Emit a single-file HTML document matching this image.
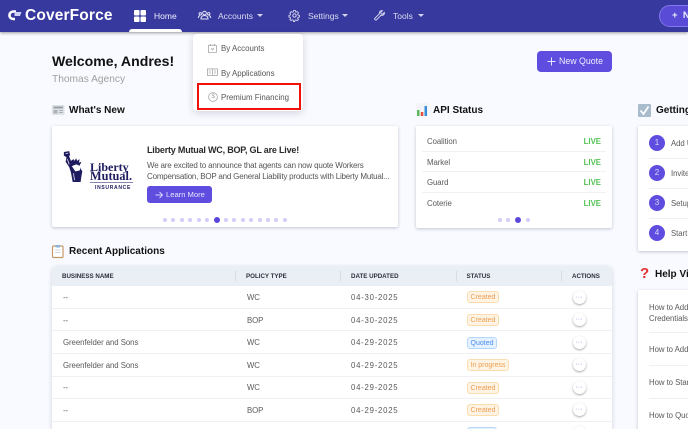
<!DOCTYPE html>
<html style="width:688px;height:429px;overflow:hidden"><head><meta charset="utf-8"><style>
html,body{margin:0;padding:0}
body{width:688px;height:429px;overflow:hidden;background:#f9faff;font-family:"Liberation Sans",sans-serif;color:#444}
#w{position:absolute;left:0;top:0;width:688px;height:429px;overflow:hidden}
.t{position:absolute;white-space:nowrap;line-height:12px;transform:translateY(-5px)}
.a{position:absolute}
svg{position:absolute;overflow:visible}
.card{position:absolute;background:#fff;border-radius:2px;box-shadow:0 1px 3px rgba(40,50,90,.28)}
.h{font-weight:700;font-size:10px;color:#111}
.n{font-size:8.5px;color:#dcdcf2}
.c{position:absolute;width:0;height:0;border-left:3px solid transparent;border-right:3px solid transparent;border-top:3px solid #d4d4ee}
.th{font-weight:700;font-size:6.2px;color:#2a2f3a}
.td{font-size:7.8px;color:#5a5a5a;letter-spacing:-.05px}
.dt{font-size:7.8px;color:#5a5a5a;letter-spacing:.75px}
.lv{right:87px;font-size:7.8px;font-weight:700;color:#55c255}
.b{position:absolute;height:10px;line-height:11px;font-size:7px;text-align:center;border-radius:3px}
.o{background:#fff4e3;border:1px solid #fbdcae;color:#ec9e55}
.q{background:#e5f2ff;border:1px solid #b5d6fb;color:#4d8ef0}
.ac{position:absolute;left:572.5px;width:13px;height:13px;border-radius:50%;background:#fff;box-shadow:0 1px 2px rgba(0,0,0,.35);color:#8f86e6;font-size:7px;line-height:13px;text-align:center}
.sep{position:absolute;height:1px;background:#eef0f4}
.d{position:absolute;width:4px;height:4px;border-radius:50%;background:#d5ccfb}
.D{position:absolute;width:6px;height:6px;border-radius:50%;background:#5b46dc}
.num{position:absolute;left:649px;width:16px;height:16px;border-radius:50%;background:#5f4ddf;color:#dcd8ff;font-size:8px;line-height:16px;text-align:center}
.m{font-size:7.9px;color:#555}
</style></head><body><div id="w">

<div class="a" style="left:0;top:0;width:688px;height:32px;background:#38399f;box-shadow:0 1px 3px rgba(0,0,0,.4)"></div>
<svg style="left:7px;top:9px" width="15" height="13" viewBox="0 0 15 13"><path d="M9 2.500H6.500C4.200 2.500 2.500 4 2.500 6.200S4.200 10 6.500 10H8" fill="none" stroke="#fff" stroke-width="2.600"/><path d="M7.500 3H14.500L13 7H7.500z" fill="#cfd0f5"/></svg>
<div class="t" style="left:25px;top:15px;font-size:15.5px;font-weight:700;color:#fff;letter-spacing:.15px">CoverForce</div>

<svg style="left:134px;top:10px" width="12" height="12"><rect x="0" y="0" width="5.500" height="5.500" rx="1" fill="#fff"/><rect x="6.500" y="0" width="5.500" height="5.500" rx="1" fill="#fff"/><rect x="0" y="6.500" width="5.500" height="5.500" rx="1" fill="#fff"/><rect x="6.500" y="6.500" width="5.500" height="5.500" rx="1" fill="#fff"/></svg>
<div class="t n" style="left:154px;top:14.5px;color:#f0f0ff">Home</div>
<div class="a" style="left:129px;top:29px;width:53px;height:3px;background:#fff;border-radius:3px 3px 0 0"></div>

<svg style="left:198px;top:10px" width="13" height="10" viewBox="0 0 13 10" fill="none" stroke="#e2e2f6" stroke-width="1"><circle cx="6.500" cy="3" r="1.800"/><path d="M3 9c0-2.500 1.500-3.500 3.500-3.500S10 6.500 10 9z"/><circle cx="2.300" cy="3.800" r="1.200"/><circle cx="10.700" cy="3.800" r="1.200"/><path d="M.3 8c0-1.500.8-2.300 1.800-2.300M12.700 8c0-1.500-.8-2.300-1.800-2.300"/></svg>
<div class="t n" style="left:218px;top:14.5px">Accounts</div>
<div class="c" style="left:257px;top:14px"></div>

<svg style="left:289px;top:10px" width="11" height="11" viewBox="0 0 11 11" fill="none" stroke="#d4d4ee"><circle cx="5.500" cy="5.500" r="1.700"/><path d="M4.500.6h2l.3 1.500 1.300-.6L9.500 3l-.9 1.100.4.900 1.400.5v1.500L9 7.400l-.4.900.9 1.200-1.400 1.200-1.200-.8-.9.300-.3 1.300H4.500l-.3-1.400-1-.3-1.200.8L.8 9.400l.8-1.200-.4-.9-1.300-.3V5.500l1.300-.4.400-1L.8 3l1.300-1.400 1.200.7 1-.4z" stroke-width=".9"/></svg>
<div class="t n" style="left:308px;top:14.5px">Settings</div>
<div class="c" style="left:342px;top:14px"></div>

<svg style="left:374px;top:10px" width="11" height="11" viewBox="0 0 11 11" fill="none" stroke="#d4d4ee" stroke-width="1"><path d="M10.300 2.500 8.500 4.200 7 3.800 6.700 2.300 8.400.7C6.800.2 5 1.500 5.400 3.800L.8 8.300c-.7.800.9 2.300 1.700 1.500L7 5.300c2 .6 3.800-1 3.300-2.800z"/></svg>
<div class="t n" style="left:393px;top:14.5px">Tools</div>
<div class="c" style="left:418px;top:14px"></div>

<div class="a" style="left:659px;top:5px;width:60px;height:20px;border:1px solid #8378ea;border-radius:11px;background:#5a4bd6"></div>
<div class="t" style="left:672px;top:14.5px;color:#eeeeff;font-size:9.5px;font-weight:700">+&nbsp;&nbsp;New</div>

<div class="t" style="left:52px;top:60px;font-size:14.1px;font-weight:700;color:#111">Welcome, Andres!</div>
<div class="t" style="left:52px;top:79px;font-size:10.2px;color:#a0a0a0">Thomas Agency</div>

<div class="a" style="left:537px;top:51px;width:74.5px;height:20.5px;background:#5f4ddf;border-radius:4px"></div>
<svg style="left:547px;top:56.5px" width="9" height="9" stroke="#e8e5ff" stroke-width="1"><path d="M4.500 .5v8M.5 4.500h8"/></svg>
<div class="t" style="left:559px;top:60px;font-size:8.8px;color:#f0eeff">New Quote</div>

<!-- What's new -->
<svg style="left:52px;top:104px" width="13" height="12"><rect x="0" y="1" width="12.500" height="10" rx="1" fill="#dfe3e8"/><rect x="1.500" y="2.500" width="9.500" height="2" fill="#9aa0a8"/><rect x="1.500" y="6" width="4" height="3.500" fill="#aab0b8"/><path d="M7 6.500h4M7 8.500h4" stroke="#aab0b8"/></svg>
<div class="t h" style="left:69px;top:110px">What's New</div>
<div class="card" style="left:52px;top:126px;width:346px;height:101px"></div>

<svg style="left:63px;top:151px" width="22" height="32" viewBox="0 0 25 36"><path d="M1 1l6-1 1 4-1 2 2 5 3-2 1 2 2-3 1 3 3-2-1 4 3-1-2 4 1 4 2 3-1 5-1 7H11L9 24 7 18 3 12 4 7 1 5z" fill="#1e1b5e"/><path d="M10 17l5-2 5 2-1 5-5 1z" fill="#fff"/><path d="M3 3l3-1M5 9l2 6M12 25l1 8" stroke="#fff" stroke-width=".8"/></svg>
<div class="t" style="left:90px;top:165.5px;font-family:'Liberation Serif',serif;font-weight:700;font-size:12px;color:#1e1b5e">Liberty</div>
<div class="t" style="left:90px;top:175px;font-family:'Liberation Serif',serif;font-weight:700;font-size:12.3px;color:#1e1b5e">Mutual.</div>
<div class="a" style="left:90px;top:182px;width:43px;height:1px;background:#8a88b0"></div>
<div class="t" style="left:95px;top:187px;font-size:5px;font-weight:700;color:#1e1b5e;letter-spacing:.7px">INSURANCE</div>

<div class="t" style="left:147px;top:149px;font-size:9px;font-weight:700;color:#2a2a2a;letter-spacing:-.2px">Liberty Mutual WC, BOP, GL are Live!</div>
<div class="t" style="left:147px;top:164.5px;font-size:8px;color:#555;letter-spacing:-.18px">We are excited to announce that agents can now quote Workers</div>
<div class="t" style="left:147px;top:176px;font-size:8px;color:#555;letter-spacing:-.2px">Compensation, BOP and General Liability products with Liberty Mutual...</div>
<div class="a" style="left:147px;top:186px;width:65px;height:17px;background:#5f4ddf;border-radius:3px"></div>
<svg style="left:155px;top:190.5px" width="8" height="8" fill="none" stroke="#dcd8ff" stroke-width=".9"><path d="M.5 4h7M4.500 1l3 3-3 3"/></svg>
<div class="t" style="left:166px;top:194px;font-size:7.6px;color:#e8e5ff">Learn More</div>

<div class="d" style="left:163px;top:218px"></div><div class="d" style="left:171px;top:218px"></div><div class="d" style="left:180px;top:218px"></div><div class="d" style="left:188px;top:218px"></div><div class="d" style="left:197px;top:218px"></div><div class="d" style="left:205px;top:218px"></div><div class="D" style="left:213.5px;top:217px"></div><div class="d" style="left:224px;top:218px"></div><div class="d" style="left:232px;top:218px"></div><div class="d" style="left:241px;top:218px"></div><div class="d" style="left:249px;top:218px"></div><div class="d" style="left:258px;top:218px"></div><div class="d" style="left:266px;top:218px"></div><div class="d" style="left:274px;top:218px"></div><div class="d" style="left:283px;top:218px"></div>

<!-- API -->
<svg style="left:416px;top:103px" width="12" height="14"><rect width="12" height="13.500" fill="#f2f4f6"/><rect x="1" y="7" width="2.500" height="6" fill="#5cb85c"/><rect x="4.800" y="9" width="2.500" height="4" fill="#e0503a"/><rect x="8.500" y="3" width="2.500" height="10" fill="#3a8fd8"/></svg>
<div class="t h" style="left:433px;top:110px">API Status</div>
<div class="card" style="left:416px;top:126px;width:195.5px;height:101.5px"></div>
<div class="t td" style="left:427px;top:141px">Coalition</div>
<div class="t td" style="left:427px;top:161.5px">Markel</div>
<div class="t td" style="left:427px;top:182px">Guard</div>
<div class="t td" style="left:427px;top:202.5px">Coterie</div>
<div class="t lv" style="top:141px">LIVE</div>
<div class="t lv" style="top:161.5px">LIVE</div>
<div class="t lv" style="top:182px">LIVE</div>
<div class="t lv" style="top:202.5px">LIVE</div>
<div class="sep" style="left:421.5px;top:151px;width:184.5px"></div>
<div class="sep" style="left:421.5px;top:171px;width:184.5px"></div>
<div class="sep" style="left:421.5px;top:192px;width:184.5px"></div>
<div class="d" style="left:498px;top:218px"></div><div class="d" style="left:506px;top:218px"></div><div class="D" style="left:515px;top:217px"></div><div class="d" style="left:525.5px;top:218px"></div>

<!-- Getting Started -->
<svg style="left:638px;top:103.5px" width="13" height="13"><rect width="13" height="13" rx="1" fill="#a9bccb"/><path d="M2.500 6.500l3 3.500 5-7.500" fill="none" stroke="#fff" stroke-width="1.700"/></svg>
<div class="t h" style="left:656px;top:110px">Getting Started</div>
<div class="card" style="left:638px;top:126px;width:80px;height:125px"></div>
<div class="num" style="top:135px">1</div><div class="num" style="top:165px">2</div><div class="num" style="top:195px">3</div><div class="num" style="top:225px">4</div>
<div class="t td" style="left:671px;top:143px">Add Users</div>
<div class="t td" style="left:671px;top:173px">Invite Team</div>
<div class="t td" style="left:671px;top:203px">Setup</div>
<div class="t td" style="left:671px;top:233px">Start</div>
<div class="sep" style="left:649px;top:158px;width:50px"></div><div class="sep" style="left:649px;top:188px;width:50px"></div><div class="sep" style="left:649px;top:218px;width:50px"></div>

<!-- Recent -->
<svg style="left:52px;top:245px" width="12" height="13"><rect x=".5" y="1" width="10.500" height="11.500" rx="1" fill="#fff" stroke="#c89a6a" stroke-width="1.200"/><rect x="3.500" y="0" width="4.500" height="2.500" fill="#8fb5d8"/><path d="M3 5h5.500M3 7.500h5.500" stroke="#d0d8e0"/></svg>
<div class="t h" style="left:69px;top:251px">Recent Applications</div>

<div class="a" style="left:52px;top:266px;width:559.5px;height:170px;background:#fff;border-radius:6px 6px 0 0;box-shadow:0 1px 4px rgba(40,50,90,.2)"></div>
<div class="a" style="left:52px;top:266px;width:559.5px;height:20px;background:#eaeff6;border-radius:6px 6px 0 0"></div>
<div class="t th" style="left:62px;top:276px">BUSINESS NAME</div>
<div class="t th" style="left:246px;top:276px">POLICY TYPE</div>
<div class="t th" style="left:351px;top:276px">DATE UPDATED</div>
<div class="t th" style="left:466.5px;top:276px">STATUS</div>
<div class="t th" style="left:572px;top:276px">ACTIONS</div>
<div class="a" style="left:235px;top:271px;width:1px;height:10px;background:#d8dde5"></div>
<div class="a" style="left:340px;top:271px;width:1px;height:10px;background:#d8dde5"></div>
<div class="a" style="left:456px;top:271px;width:1px;height:10px;background:#d8dde5"></div>
<div class="a" style="left:561px;top:271px;width:1px;height:10px;background:#d8dde5"></div>

<div class="sep" style="left:52px;top:308px;width:559.5px"></div><div class="sep" style="left:52px;top:330px;width:559.5px"></div><div class="sep" style="left:52px;top:353px;width:559.5px"></div><div class="sep" style="left:52px;top:375.5px;width:559.5px"></div><div class="sep" style="left:52px;top:398px;width:559.5px"></div><div class="sep" style="left:52px;top:421px;width:559.5px"></div>

<div class="t td" style="left:63px;top:297px">--</div><div class="t td" style="left:247px;top:297px">WC</div><div class="t dt" style="left:351px;top:297px">04-30-2025</div>
<div class="t td" style="left:63px;top:319.5px">--</div><div class="t td" style="left:247px;top:319.5px">BOP</div><div class="t dt" style="left:351px;top:319.5px">04-30-2025</div>
<div class="t td" style="left:63px;top:342px">Greenfelder and Sons</div><div class="t td" style="left:247px;top:342px">WC</div><div class="t dt" style="left:351px;top:342px">04-29-2025</div>
<div class="t td" style="left:63px;top:364.5px">Greenfelder and Sons</div><div class="t td" style="left:247px;top:364.5px">WC</div><div class="t dt" style="left:351px;top:364.5px">04-29-2025</div>
<div class="t td" style="left:63px;top:387px">--</div><div class="t td" style="left:247px;top:387px">WC</div><div class="t dt" style="left:351px;top:387px">04-29-2025</div>
<div class="t td" style="left:63px;top:409.5px">--</div><div class="t td" style="left:247px;top:409.5px">BOP</div><div class="t dt" style="left:351px;top:409.5px">04-29-2025</div>

<div class="b o" style="left:467px;top:291px;width:30px">Created</div>
<div class="b o" style="left:467px;top:314px;width:30px">Created</div>
<div class="b q" style="left:467px;top:336.5px;width:28px">Quoted</div>
<div class="b o" style="left:467px;top:359px;width:40px">In progress</div>
<div class="b o" style="left:467px;top:381.5px;width:30px">Created</div>
<div class="b o" style="left:467px;top:404px;width:30px">Created</div>
<div class="b q" style="left:467px;top:426.5px;width:28px">Quoted</div>

<div class="ac" style="top:290.5px">···</div><div class="ac" style="top:313px">···</div><div class="ac" style="top:335.5px">···</div><div class="ac" style="top:358px">···</div><div class="ac" style="top:380.5px">···</div><div class="ac" style="top:403px">···</div><div class="ac" style="top:425.5px">···</div>

<!-- Help -->
<div class="t" style="left:640px;top:273px;font-size:15px;font-weight:700;color:#e53030">?</div>
<div class="t h" style="left:655px;top:274px">Help Videos</div>
<div class="card" style="left:638px;top:290px;width:80px;height:160px"></div>
<div class="t td" style="left:649px;top:306.5px">How to Add</div>
<div class="t td" style="left:649px;top:318px">Credentials</div>
<div class="t td" style="left:649px;top:348.5px">How to Add</div>
<div class="t td" style="left:649px;top:382px">How to Start</div>
<div class="t td" style="left:649px;top:415px">How to Quote</div>
<div class="sep" style="left:649px;top:332px;width:50px"></div><div class="sep" style="left:649px;top:365px;width:50px"></div><div class="sep" style="left:649px;top:398px;width:50px"></div>

<!-- Dropdown -->
<div class="a" style="left:193px;top:34px;width:110px;height:77px;background:#fff;border-radius:4px;box-shadow:0 2px 8px rgba(30,30,70,.18)"></div>
<svg style="left:208px;top:44px" width="9" height="9" fill="none" stroke="#a5a5a5" stroke-width=".8"><rect x=".4" y="1.200" width="8" height="7.400" rx=".5"/><path d="M2.500 0v2M6.500 0v2M3 4l1.500 2L6 4"/></svg>
<div class="t m" style="left:221px;top:48px">By Accounts</div>
<svg style="left:207px;top:68px" width="11" height="8" fill="none" stroke="#a5a5a5" stroke-width=".8"><rect x=".4" y=".9" width="10" height="6.500"/><path d="M5.400 .9v6.500M1.800 3h2M1.800 5h2M7 3h2M7 5h2"/></svg>
<div class="t m" style="left:221px;top:72.5px">By Applications</div>
<div class="a" style="left:197px;top:83px;width:100px;height:23px;border:2px solid #f0120a"></div>
<svg style="left:208px;top:92px" width="10" height="10" fill="none" stroke="#a5a5a5" stroke-width=".8"><circle cx="5" cy="5" r="4.400"/></svg>
<div class="t" style="left:211.5px;top:96px;font-size:6px;color:#a0a0a0">$</div>
<div class="t m" style="left:221px;top:97px">Premium Financing</div>

</div></body></html>
